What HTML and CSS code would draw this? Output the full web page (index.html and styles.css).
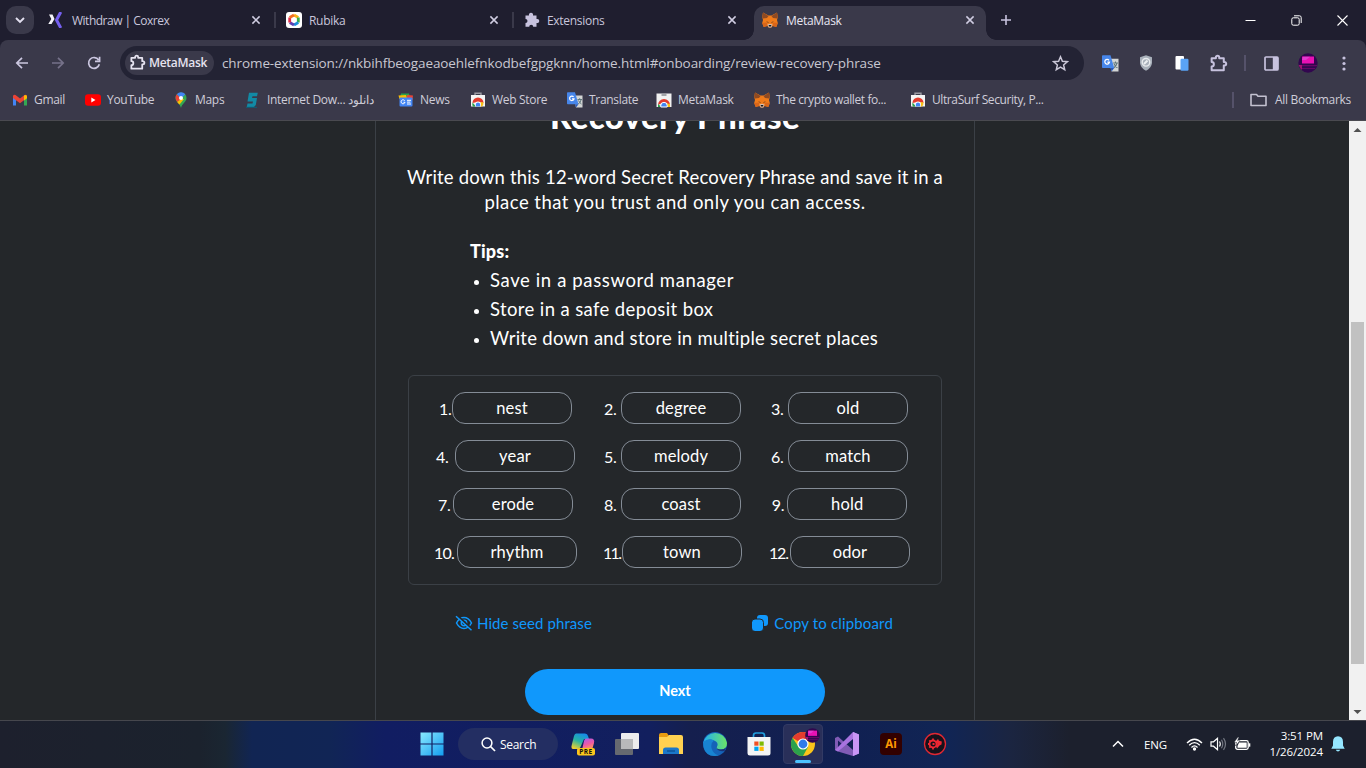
FILE: index.html
```html
<!DOCTYPE html>
<html lang="en">
<head>
<meta charset="utf-8">
<title>MetaMask</title>
<link rel="stylesheet" href="styles.css">
</head>
<body>
<svg class="defs" width="0" height="0">
  <defs>
    <symbol id="fox" viewBox="0 0 16 16">
      <path d="M1 0.5 6.5 3.5H9.5L15 .5 15.8 5 15 8 15.8 11 14.3 15 10.8 14 9.3 15.5H6.7L5.2 14 1.7 15 .2 11 1 8 .2 5z" fill="#f07b1a"/>
      <path d="M1 .5 6.5 4 5 6 .8 6.5.2 5zM15 .5 9.500 4 11 6 15.200 6.500 15.800 5z" fill="#8f4a22"/>
      <path d="M.2 11 5 10.500 5.200 14 1.700 15zM15.800 11 11 10.500 10.800 14 14.300 15z" fill="#d9661a"/>
      <path d="M4 9 6.500 10.200 6.300 11zM12 9 9.500 10.200 9.700 11z" fill="#3a2a2a"/>
      <path d="M5.500 12.500 8 11.800 10.500 12.500 9.300 15.500H6.700z" fill="#d5bfb2"/>
      <path d="M6.600 13H9.400L9 14.400H7z" fill="#1d1a1c"/>
    </symbol>
    <symbol id="puzzle" viewBox="0 0 18 18">
      <path d="M2.500 4H6.500V3.300A1.600 1.600 0 0 1 9.700 3.300V4H14V7.600H14.600A1.700 1.700 0 0 1 14.600 11H14V15.500H2.500V11.800A2.100 2.100 0 0 0 2.500 7.600z" fill="none" stroke="currentColor" stroke-width="1.900" stroke-linejoin="round"/>
    </symbol>
    <symbol id="store" viewBox="0 0 16 16">
      <path d="M5 3V1.200H11V3" fill="none" stroke="#9a9aa2" stroke-width="1.400"/>
      <path d="M1 3H15V14.500H1z" fill="#f4f4f4"/>
      <path d="M2.500 11A5.500 5.500 0 0 1 13.500 11L11 10.500H5z" fill="#e33b2e"/>
      <path d="M2.500 10.500 6 14.500H3A5 5 0 0 1 2.500 10.500z" fill="#2ba24c"/>
      <path d="M13.500 10.500A5 5 0 0 1 12 14.500H8L11 10z" fill="#fbc116"/>
      <path d="M5 14.500V12.500A3 3 0 0 1 11 12.500V14.500z" fill="#fff"/>
      <path d="M5.800 14.500V12.800A2.200 2.200 0 0 1 10.200 12.800V14.500z" fill="#4285f4"/>
    </symbol>
    <symbol id="translate" viewBox="0 0 16 16">
      <path d="M6 3.500H15.500V15.500H9z" fill="#d3d6d5"/>
      <path d="M.8.200H8L11.500 12.200H.8Q0 12.200 0 11.400V1Q0 .2.800.200z" fill="#4786ea"/>
      <path d="M8 12.200H11.500L9 15.500z" fill="#2858b8"/>
      <path d="M6.600 5A2.200 2.200 0 1 0 7 6.800H5" fill="none" stroke="#fff" stroke-width="1.200"/>
      <path d="M10.500 7.500H15M12.700 6.200V7.500M14.200 7.500Q13.500 10.500 11.300 12M11.500 8.500Q12.500 10.800 14.500 12" fill="none" stroke="#60777c" stroke-width="1"/>
    </symbol>
    <symbol id="close" viewBox="0 0 10 10"><path d="M1.400 1.400 8.600 8.600M8.600 1.400 1.400 8.600" stroke="currentColor" stroke-width="1.500"/></symbol>
    <symbol id="avatar" viewBox="0 0 20 20">
      <circle cx="10" cy="10" r="9.700" fill="#32064f"/>
      <path d="M4 3.500H16V10.500H4z" fill="#e811b4"/>
      <path d="M5 3.700H12L8 7H4z" fill="#e03bcf"/>
      <path d="M1 12H19V13.300H1zM3 15H17V16H3z" fill="#650764"/>
      <path d="M.6 12H4V16.500H3z" fill="#a01173"/>
    </symbol>
  </defs>
</svg>

<header class="tabstrip">
  <div class="tab-search"><svg width="10" height="7" viewBox="0 0 10 7"><path d="M1 1 5 5 9 1" fill="none" stroke="currentColor" stroke-width="1.900"/></svg></div>
  <div class="tab first">
    <svg class="favicon" viewBox="0 0 16 16"><path d="M12.800 0 8.500 8 12.800 16" fill="none" stroke="#7560ef" stroke-width="3"/><path d="M1 2.500H4.500L6.500 7 3.500 12H.3L3.300 7z" fill="#f5f5fa"/></svg>
    <span class="tab-title">Withdraw | Coxrex</span>
    <svg class="x"><use href="#close"/></svg>
  </div>
  <div class="tab ruled">
    <svg class="favicon" viewBox="0 0 16 16"><rect width="16" height="16" rx="3" fill="#fff"/><g fill="none" stroke-width="2.800"><path d="M8 3 12.300 5.500" stroke="#f6b21a"/><path d="M12.300 5.500V10.500" stroke="#3cae4a"/><path d="M12.300 10.500 8 13" stroke="#1d8fdc"/><path d="M8 13 3.700 10.500" stroke="#5842b5"/><path d="M3.700 10.500V5.500" stroke="#e02e4a"/><path d="M3.700 5.500 8 3" stroke="#f36c21"/></g></svg>
    <span class="tab-title">Rubika</span>
    <svg class="x"><use href="#close"/></svg>
  </div>
  <div class="tab ruled">
    <svg class="favicon" viewBox="0 0 16 16"><path d="M1.500 3.500H5A2.100 2.100 0 1 1 9 3.500H12.500V7A2.100 2.100 0 1 1 12.500 11V14.800H9.200A2 2 0 0 0 5.200 14.800H1.500V11A2 2 0 0 0 1.500 7z" fill="#c7c2de"/></svg>
    <span class="tab-title">Extensions</span>
    <svg class="x"><use href="#close"/></svg>
  </div>
  <div class="tab active">
    <svg class="favicon"><use href="#fox"/></svg>
    <span class="tab-title">MetaMask</span>
    <svg class="x"><use href="#close"/></svg>
  </div>
  <svg class="new-tab" width="12" height="12" viewBox="0 0 12 12"><path d="M6 1V11M1 6H11" stroke="currentColor" stroke-width="1.600"/></svg>
  <div class="window-controls">
    <svg width="11" height="11"><path d="M.5 5.500H10.500" stroke="#fff"/></svg>
    <svg width="11" height="11" fill="none" stroke="#fff"><rect x=".8" y="2.800" width="7.400" height="7.400" rx="1.500"/><path d="M3 .8H8.500Q10.200.8 10.200 2.500V8"/></svg>
    <svg width="11" height="11"><path d="M.5.500 10.500 10.500M10.500.500.500 10.500" stroke="#fff" stroke-width="1.100"/></svg>
  </div>
</header>

<div class="chrome">
  <div class="toolbar">
    <svg class="nav back" viewBox="0 0 14 14"><path d="M13 7H2M7 1.800 1.800 7 7 12.200" fill="none" stroke="#cbc7e0" stroke-width="1.700"/></svg>
    <svg class="nav forward" viewBox="0 0 14 14"><path d="M1 7H12M7 1.800 12.200 7 7 12.200" fill="none" stroke="#76728a" stroke-width="1.700"/></svg>
    <svg class="nav reload" viewBox="0 0 14 14"><path d="M11.600 4A5.400 5.400 0 1 0 12.300 8.200M12.600.8V5.300H8" fill="none" stroke="#cbc7e0" stroke-width="1.700"/></svg>
    <div class="omnibox">
      <div class="chip"><svg width="17" height="17"><use href="#puzzle"/></svg><span>MetaMask</span></div>
      <span class="url">chrome-extension://nkbihfbeogaeaoehlefnkodbefgpgknn/home.html#onboarding/review-recovery-phrase</span>
      <svg class="star" width="17" height="17" viewBox="0 0 17 17"><path d="M8.500 1.800 10.400 6.300 15.300 6.700 11.600 9.900 12.700 14.700 8.500 12.100 4.300 14.700 5.400 9.900 1.700 6.700 6.600 6.300z" fill="none" stroke="#cbc8d8" stroke-width="1.500"/></svg>
    </div>
    <div class="actions">
      <svg class="a-translate" width="17" height="17"><use href="#translate"/></svg>
      <svg class="a-shield" width="14" height="16" viewBox="0 0 14 16"><path d="M7 .3 13 2.300V8Q12.500 13 7 15.700 1.500 13 1 8V2.300z" fill="#a8b0ba"/><circle cx="7" cy="7.300" r="3.800" fill="none" stroke="#e8ebee" stroke-width="1.400"/><path d="M5 9 8.500 5.500" stroke="#edf0f2" stroke-width="2"/></svg>
      <svg class="a-pages" width="14" height="15" viewBox="0 0 14 15"><rect x=".5" width="8.500" height="13.500" rx="1" fill="#fff"/><rect x="5.500" y="2.700" width="8" height="12" rx="1.200" fill="#5aa3f5"/></svg>
      <svg class="a-puzzle" width="19" height="19"><use href="#puzzle"/></svg>
      <i class="bar"></i>
      <svg class="a-panel" width="15" height="15" viewBox="0 0 15 15"><rect x="1" y="1" width="13" height="13" rx="1" fill="none" stroke="#c7c2de" stroke-width="1.700"/><path d="M8.800 1H14V14H8.800z" fill="#c7c2de"/></svg>
      <svg class="a-avatar" width="20" height="20"><use href="#avatar"/></svg>
      <svg class="a-menu" width="4" height="15" fill="#c7c2de"><circle cx="2" cy="2" r="1.600"/><circle cx="2" cy="7.500" r="1.600"/><circle cx="2" cy="13" r="1.600"/></svg>
    </div>
  </div>
  <nav class="bookmarks">
    <div class="bm b1"><svg viewBox="0 0 16 16"><path d="M1 3.500V13.500H4V7z" fill="#4285f4"/><path d="M15 3.500V13.500H12V7z" fill="#34a853"/><path d="M1 4.200Q1.500 2.300 3.500 3L8 6.500 12.500 3Q14.500 2.300 15 4.200V6L8 11.300 1 6z" fill="#ea4335"/><path d="M12 3.500Q14.800 2 15 4.500V6.200L12 8.400z" fill="#fbbc04"/></svg><span>Gmail</span></div>
    <div class="bm b2"><svg viewBox="0 0 16 16"><rect y="2.300" width="16" height="11.500" rx="3" fill="#f00"/><path d="M6.300 5.600V10.500L10.500 8z" fill="#fff"/></svg><span>YouTube</span></div>
    <div class="bm b3"><svg viewBox="0 0 16 16"><path d="M2.500 6A5.500 5.500 0 0 1 13.500 6C13.500 10 9 11.500 8 16 7 11.500 2.500 10 2.500 6z" fill="#34a853"/><path d="M3.800 2.300A5.500 5.500 0 0 1 12.300 2.300L8 7z" fill="#4285f4"/><path d="M3.800 2.300 8 7 4.200 10Q1 5.500 3.800 2.300z" fill="#ea4335"/><path d="M8 7 4.200 10Q5.500 11.500 6.500 12.500L11 7z" fill="#fbbc04"/><circle cx="8" cy="6" r="2" fill="#fff"/></svg><span>Maps</span></div>
    <div class="bm b4"><svg viewBox="0 0 16 16"><path d="M4 .8H12.800L12 4.200H7.500L7 6H12L10.800 13 9 15H1.800L2.500 11.500H7.500L8 9.500H2.500z" fill="#128aa5"/><path d="M1 15.300H12" stroke="#0d6179"/></svg><span>Internet Dow... <bdi>دانلود</bdi></span></div>
    <div class="bm b5"><svg viewBox="0 0 16 16"><path d="M3 1.500H11L12 6H2z" fill="#2ba24c"/><path d="M9 3 15 3.500 14.500 8H8z" fill="#ea4335"/><path d="M.5 3.500 8 3 9 7H1.500z" fill="#fbbc04"/><rect x="1.500" y="5.500" width="13" height="9" rx="1" fill="#4285f4"/><path d="M6.800 8.800A2 2 0 1 0 7 10.300H5.500M9 8.300H13M9 10.100H12.500M9 12H13" fill="none" stroke="#fff" stroke-width="1"/></svg><span>News</span></div>
    <div class="bm b6"><svg><use href="#store"/></svg><span>Web Store</span></div>
    <div class="bm b7"><svg><use href="#translate"/></svg><span>Translate</span></div>
    <div class="bm b8"><svg viewBox="0 0 16 16"><path d="M.5 1.500H15.500V15H.5z" fill="#f1f1f1"/><path d="M5.500 3H10.500" stroke="#70727a" stroke-width="1.200"/><path d="M2 13A6 6 0 0 1 14 13L11 11.500H5z" fill="#e33b2e"/><path d="M2 12 5.500 15H2z" fill="#2ba24c"/><path d="M14 12V15H9L11 11.500z" fill="#fbc116"/><path d="M4.800 15V13.500A3.200 3.200 0 0 1 11.200 13.500V15z" fill="#4285f4" stroke="#fff"/></svg><span>MetaMask</span></div>
    <div class="bm b9"><svg><use href="#fox"/></svg><span>The crypto wallet fo...</span></div>
    <div class="bm b10"><svg><use href="#store"/></svg><span>UltraSurf Security, P...</span></div>
    <div class="all-bookmarks"><svg width="17" height="14" viewBox="0 0 17 14"><path d="M1 1.500H6.500L8 3.300H16V12.500H1z" fill="none" stroke="#c3c1d0" stroke-width="1.600" stroke-linejoin="round"/></svg><span>All Bookmarks</span></div>
  </nav>
</div>

<main class="viewport">
  <section class="card">
    <h2>Recovery Phrase</h2>
    <p class="intro"><span class="i1">Write down this 12-word Secret Recovery Phrase and save it in a</span><br><span class="i2">place that you trust and only you can access.</span></p>
    <div class="tips">
      <b>Tips:</b>
      <ul>
        <li class="t1">Save in a password manager</li>
        <li class="t2">Store in a safe deposit box</li>
        <li class="t3">Write down and store in multiple secret places</li>
      </ul>
    </div>
    <ol class="words">
      <li><i class="n13">1.</i><b>nest</b></li><li><i class="n17">2.</i><b>degree</b></li><li><i class="n17">3.</i><b>old</b></li>
      <li><i class="n19">4.</i><b>year</b></li><li><i class="n17">5.</i><b>melody</b></li><li><i class="n17">6.</i><b>match</b></li>
      <li><i class="n15">7.</i><b>erode</b></li><li><i class="n17">8.</i><b>coast</b></li><li><i class="n16">9.</i><b>hold</b></li>
      <li><i class="n23">10.</i><b>rhythm</b></li><li><i class="n18">11.</i><b>town</b></li><li><i class="n21">12.</i><b>odor</b></li>
    </ol>
    <div class="links">
      <a class="hide"><svg width="18" height="16" viewBox="0 0 18 16" fill="none" stroke="currentColor" stroke-width="1.500"><path d="M1.500 8Q4.500 2.500 9 2.500T16.500 8Q13.500 13.500 9 13.500T1.500 8z"/><circle cx="9" cy="8" r="2.700"/><path d="M2.500 .8 17.500 14.500" stroke="#24272a" stroke-width="2"/><path d="M1 1.200 16.500 15.300"/></svg><span>Hide seed phrase</span></a>
      <a class="copy"><svg width="16" height="16" viewBox="0 0 16 16"><rect x="5" y="0" width="11" height="11" rx="3" fill="#1098fc"/><rect x="-.5" y="4" width="12" height="12.500" rx="3.500" fill="#1098fc" stroke="#24272a" stroke-width="1"/></svg><span>Copy to clipboard</span></a>
    </div>
    <button class="next">Next</button>
  </section>
  <aside class="scrollbar">
    <svg width="17" height="17"><path d="M4.500 11 8.500 7 12.500 11z" fill="#505050"/></svg>
    <div class="thumb"></div>
    <svg width="17" height="17"><path d="M4.500 7 8.500 11 12.500 7z" fill="#505050"/></svg>
  </aside>
</main>

<footer class="taskbar">
  <svg class="start" width="24" height="24" viewBox="0 0 24 24"><defs><linearGradient id="win" x2="1" y2="1"><stop stop-color="#8ae9ff"/><stop offset="1" stop-color="#139df0"/></linearGradient></defs><path d="M.5.500H11.400V11.400H.5zM12.600.500H23.500V11.400H12.600zM.5 12.600H11.400V23.500H.5zM12.600 12.600H23.500V23.500H12.600z" fill="url(#win)"/></svg>
  <div class="search"><svg width="15" height="15" viewBox="0 0 15 15"><circle cx="6" cy="6" r="4.900" fill="none" stroke="#fff" stroke-width="1.500"/><path d="M9.500 9.500 14 14" stroke="#fff" stroke-width="1.700"/></svg><span>Search</span></div>
  <div class="apps">
    <svg viewBox="0 0 24 24"><defs><linearGradient id="cp" x1=".7" x2=".2" y2="1"><stop stop-color="#168bea"/><stop offset=".5" stop-color="#26b3a4"/><stop offset="1" stop-color="#f6cf2b"/></linearGradient><linearGradient id="cq" x2=".4" y2="1"><stop stop-color="#a55af4"/><stop offset=".6" stop-color="#ef59a1"/><stop offset="1" stop-color="#ff9a5b"/></linearGradient></defs><path d="M5 1.500H14Q16.500 1.500 17 4L18 7H13L9.500 15Q8.500 17.500 6 17H2Q-.5 17 1 12L3 4Q3.700 1.500 5 1.500z" fill="url(#cp)"/><path d="M15 6.500H20Q24 6.500 23 11L21 18H11L13 9Q13.500 6.500 15 6.500z" fill="url(#cq)"/><rect x="6" y="16" width="18" height="7.500" rx="2" fill="#fac51c"/><text x="15" y="22.200" class="pre">PRE</text></svg>
    <svg viewBox="0 0 24 24"><rect x="6" y="1" width="18" height="16" rx="1" fill="#ececed"/><rect y="7" width="18" height="16" rx="1" fill="#666970"/><path d="M6 7H18V17H6z" fill="#b8b9bb"/></svg>
    <svg viewBox="0 0 24 24"><path d="M0 3Q0 1 2 1H8L10 4V8H0z" fill="#e89b10"/><path d="M0 5H8L10 3H22Q24 3 24 5V22H0z" fill="#ffd151"/><path d="M4 22V18Q4 15.500 6.500 15.500H17.500Q20 15.500 20 18V22z" fill="#1b77c9"/><path d="M8 19H16" stroke="#0a4c8c" stroke-width="1.200"/></svg>
    <svg viewBox="0 0 24 24"><defs><linearGradient id="ed" x2="1"><stop stop-color="#23aef0"/><stop offset="1" stop-color="#6be466"/></linearGradient></defs><circle cx="12" cy="12" r="12" fill="#1563b8"/><path d="M.3 11A12 12 0 0 1 24 11Q24 17 18 17.500 13 18 13.500 15.500 16 12 13 9.500 6 5 .3 11z" fill="url(#ed)"/><path d="M.2 10Q5 5.500 11 8.500 7.500 11 8.500 16 10 22 16 23.500 3 26 .5 15z" fill="#1884d2"/><path d="M13 14Q13.500 17.500 18 17.500 21.500 17.500 23 15.500L21.500 19Q13 20 13 14z" fill="#173378"/></svg>
    <svg viewBox="0 0 24 24"><path d="M6.500 6V3.500Q6.500 1 9 1H15Q17.500 1 17.500 3.500V6" fill="none" stroke="#209fdd" stroke-width="1.700"/><path d="M.5 5H23.500V21Q23.500 23.500 21 23.500H3Q.5 23.500.5 21z" fill="#f3f4f5"/><path d="M7.300 9.500H11.500V13.700H7.300z" fill="#f25022"/><path d="M12.500 9.500H16.700V13.700H12.500z" fill="#7fba00"/><path d="M7.300 14.700H11.500V18.900H7.300z" fill="#00a4ef"/><path d="M12.500 14.700H16.700V18.900H12.500z" fill="#ffb900"/></svg>
    <div class="running"><svg viewBox="0 0 24 24"><circle cx="12" cy="12" r="12" fill="#fcc41a"/><path d="M12 12 1.600 6A12 12 0 0 1 22.400 6L22 7H12z" fill="#e33b2e"/><path d="M12 12 17 15 12 24A12 12 0 0 1 1.600 6L7 14z" fill="#2ba24c"/><circle cx="12" cy="12" r="5.600" fill="#fff"/><circle cx="12" cy="12" r="4.400" fill="#317bea"/></svg><svg class="badge"><use href="#avatar"/></svg></div>
    <svg viewBox="0 0 24 24"><path d="M0 6 3 4.500 18 18V24L3 19.500 0 18z" fill="#805bb5"/><path d="M3 8.500 7 12 3 15.500z" fill="#17205a"/><path d="M0 18 18 0 24 2.500V21.500L18 24V7L3 19.500z" fill="#a873df"/><path d="M18 0 24 2.500V21.500L18 24z" fill="#c895f5"/></svg>
    <svg viewBox="0 0 24 24"><rect x="1" y="1" width="22" height="22" rx="4" fill="#320000"/><text x="12" y="16" class="ai">Ai</text></svg>
    <svg viewBox="0 0 24 24"><circle cx="12" cy="12" r="10.500" fill="#17121b" stroke="#df2833" stroke-width="1.300"/><g fill="none" stroke="#ef2733"><circle cx="10" cy="12" r="3.500" stroke-width="1.800"/><path d="M10 6.500V8.500M10 15.500V17.500M5 12H6.500M6.300 8.300 7.500 9.500M6.300 15.700 7.500 14.500M9.500 12H11.500" stroke-width="1.800"/></g><path d="M12.500 9.500 15 7 16 8.800 18.800 9.500 18.500 12.500 16.500 13.500 14 16.500 12.800 14 14.500 12z" fill="#ef2733"/></svg>
  </div>
  <div class="tray">
    <svg class="up" width="12" height="8"><path d="M1 6.500 6 1.500 11 6.500" fill="none" stroke="#fff" stroke-width="1.500"/></svg>
    <span class="lang">ENG</span>
    <svg class="wifi" width="17" height="13" viewBox="0 0 17 13" fill="none" stroke="#fff" stroke-width="1.300"><path d="M1 5Q8.500-2.500 16 5M3.200 7.300Q8.500 2 13.800 7.300M5.500 9.500Q8.500 6.300 11.500 9.500"/><circle cx="8.500" cy="11" r="1" fill="#fff"/></svg>
    <svg class="sound" width="17" height="14" viewBox="0 0 17 14" fill="none" stroke="#fff" stroke-width="1.200"><path d="M1 4.800H3.500L7.500 1.300V12.700L3.500 9.200H1zM9.500 4.500Q11 7 9.500 9.500"/><path d="M11.500 2.800Q14 7 11.500 11.200M13.500 1.200Q17.500 7 13.500 12.800" stroke="#737782"/></svg>
    <svg class="battery" width="17" height="14" viewBox="0 0 17 14"><rect x="1.700" y="3.700" width="12.500" height="8.600" rx="1.800" fill="none" stroke="#fff" stroke-width="1.300"/><path d="M5 5.500H12.700V10.700H3.500V9z" fill="#fff"/><path d="M14.800 6.300H16.300V9.700H14.800z" fill="#fff"/><path d="M4 0 0 5.300H2.500L1.500 9 6 3.700H3.500L5 0z" fill="#fff" stroke="#1c202c" stroke-width=".5"/></svg>
    <div class="clock"><span class="time">3:51 PM</span><span class="date">1/26/2024</span></div>
    <svg class="bell" width="14" height="16" viewBox="0 0 14 16"><path d="M7 .3Q12 .6 12 6V9.500L13.700 12.800H.3L2 9.500V6Q2 .6 7 .3zM4.800 13.700H9.200Q8.500 15.500 7 15.500T4.800 13.700z" fill="#95e6ff"/></svg>
  </div>
</footer>
</body>
</html>
```
FILE: styles.css
```css
* { box-sizing: border-box; }
body {
  margin: 0; width: 1366px; height: 768px; overflow: hidden;
  display: flex; flex-direction: column;
  background: #1f1e2f; color: #d6d4e2;
  font: 12px "Open Sans", "Noto Sans", sans-serif;
  letter-spacing: -.3px;
}
svg { display: block; flex: none; }
.defs { position: absolute; }
span { white-space: nowrap; }

.tabstrip { height: 40px; flex: none; display: flex; align-items: center; background: #1f1e2f; }
.tab-search { width: 28px; height: 28px; margin-left: 6px; border-radius: 10px; background: #3a394a; display: grid; place-items: center; color: #e3e0f0; }
.tab { width: 238px; height: 40px; display: flex; align-items: center; padding: 0 14px 0 11px; position: relative; color: #c9c6dc; }
.tab.first { margin-left: 3px; }
.tab.first .tab-title { letter-spacing: -.5px; }
.tab.ruled::before { content: ""; width: 2px; height: 16px; background: #3a394a; margin: 0 10px 0 -12px; }
.favicon { width: 16px; height: 16px; }
.tab-title { margin-left: 8px; flex: 1; }
.tab.ruled .tab-title { margin-left: 7px; }
.x { width: 10px; height: 10px; color: #d0cde2; }
.tab.active { width: 232px; height: 34px; margin: 6px 0 0 3px; padding: 0 11px 6px 8px; border-radius: 10px 10px 0 0; background: #3a394a; color: #e8e6f2; }
.tab.active::before, .tab.active::after { content: ""; position: absolute; bottom: 0; width: 10px; height: 10px; }
.tab.active::before { left: -10px; background: radial-gradient(circle at 0 0, transparent 9.500px, #3a394a 10px); }
.tab.active::after { right: -10px; background: radial-gradient(circle at 100% 0, transparent 9.500px, #3a394a 10px); }
.new-tab { margin-left: 14px; color: #c7c2de; }
.window-controls { margin-left: auto; display: flex; gap: 35px; padding-right: 18px; }

.chrome { height: 81px; flex: none; background: #3a394a; border-radius: 8px 8px 0 0; border-bottom: 1px solid #4a4a50; }
.toolbar { height: 46px; display: flex; align-items: center; }
.nav { width: 14px; height: 14px; }
.back { margin-left: 15px; }
.forward { margin-left: 22px; }
.reload { margin-left: 22px; }
.omnibox { width: 964px; height: 34px; margin-left: 19px; border-radius: 17px; background: #232334; display: flex; align-items: center; padding: 0 15px 0 5px; }
.chip { width: 89px; height: 24px; border-radius: 12px; background: #3a394a; display: flex; align-items: center; padding: 0 0 1px 4px; gap: 3px; color: #e6e3f0; font-weight: 600; }
.url { margin-left: 8px; flex: 1; font-size: 13.500px; letter-spacing: -.1px; color: #c8c7d1; }
.actions { flex: 1; display: flex; align-items: center; }
.a-translate { margin-left: 18px; }
.a-shield { margin-left: 20px; }
.a-pages { margin-left: 22px; }
.a-puzzle { margin-left: 20px; color: #c7c2de; }
.bar { width: 2px; height: 16px; background: #55526a; margin-left: 16px; }
.a-panel { margin-left: 18px; }
.a-avatar { margin-left: 19px; }
.a-menu { margin-left: 24px; }

.bookmarks { height: 34px; display: flex; align-items: center; padding: 0 15px 6px 12px; color: #cfcdd9; }
.bm { display: flex; align-items: center; gap: 6px; height: 28px; }
.bm svg { width: 16px; height: 16px; }
.bm span, .all-bookmarks span { padding-bottom: 2px; }
.b1 { width: 73px; }
.b2 { width: 88px; }
.b3 { width: 72px; }
.b4 { width: 153px; }
.b5 { width: 72px; }
.b6 { width: 97px; }
.b7 { width: 89px; }
.b8 { width: 98px; }
.b9 { width: 156px; }
.b9 span, .b10 span { letter-spacing: -.4px; }
.all-bookmarks { margin-left: auto; display: flex; align-items: center; gap: 8px; border-left: 2px solid #55526a; height: 16px; padding-left: 16px; }

.viewport { height: 599px; flex: none; display: flex; background: #24272a; overflow: hidden; color: #fff; letter-spacing: 0; font-variant-ligatures: none; font-family: Lato, "Open Sans", sans-serif; }
.card { width: 600px; margin-left: 375px; padding: 0 32px; border: solid #3b4046; border-width: 0 1px; }
h2 { margin: -25px 0 0; font-size: 33px; line-height: 40px; font-weight: 900; text-align: center; letter-spacing: .350px; }
.intro { margin: 29px -10px 0; font-size: 18.500px; line-height: 25px; text-align: center; }
.i1 { letter-spacing: .180px; }
.i2 { letter-spacing: .480px; }
.tips { margin: 22px 0 0 62px; font-size: 18.500px; line-height: 29px; }
.tips b { display: block; font-weight: 900; font-size: 18px; letter-spacing: .2px; }
.tips ul { margin: 0; padding-left: 20px; white-space: nowrap; }
.tips li::marker { font-size: 14px; }
.t1 { letter-spacing: .620px; }
.t2 { letter-spacing: .380px; }
.t3 { letter-spacing: .270px; }
.words { list-style: none; margin: 22px 0 0; width: 534px; height: 210px; border: 1px solid #3b4046; border-radius: 6px; padding: 16px 18px 16px 13px; display: grid; grid-template-columns: repeat(3, 167px); grid-auto-rows: 32px; row-gap: 16px; font-size: 16.500px; }
.words li { display: flex; justify-content: center; align-items: center; }
.words i { font-style: normal; white-space: nowrap; font-size: 16px; letter-spacing: -.4px; }
.words b { width: 120px; height: 32px; border: 1px solid #848c96; border-radius: 13px; font-weight: 400; text-align: center; line-height: 30px; letter-spacing: .15px; }
.n13 { width: 13px; } .n15 { width: 15px; } .n16 { width: 15.500px; } .n17 { width: 17px; } .n19 { width: 19px; }
.words .n18 { width: 19px; letter-spacing: -1.700px; }
.words .n21 { width: 21px; letter-spacing: -1.200px; }
.words .n23 { width: 23px; letter-spacing: -.8px; }
.links { display: flex; justify-content: space-between; height: 20px; margin: 28px 49px 0 47px; color: #1098fc; font-size: 15px; }
.links a { display: flex; align-items: center; }
.links span { padding-bottom: 1px; }
.hide { gap: 4px; letter-spacing: .080px; }
.copy { gap: 6px; letter-spacing: .150px; }
.next { display: block; width: 300px; height: 46px; margin: 36px auto 0; padding: 0 0 4px; border: 0; border-radius: 23px; background: #1098fc; color: #fff; font: 700 14.500px Lato, sans-serif; }
.scrollbar { width: 17px; height: 599px; margin-left: 374px; background: #f1f1f1; display: flex; flex-direction: column; }
.thumb { width: 13px; height: 342px; margin: 184px 2px auto; background: #c1c1c1; }

.taskbar { height: 48px; flex: none; display: flex; align-items: center; padding-bottom: 1px; border-top: 1px solid #46474d; background: linear-gradient(90deg, #1d202d 0, #1b222d 200px, #1a2632 225px, #112553 252px, #112555 330px, #111d62 385px, #121f5e 650px, #151f4e 690px, #102052 850px, #112554 950px, #1b2541 1010px, #1c202d 1070px); color: #fff; }
.start { margin-left: 420px; }
.search { width: 100px; height: 32px; margin-left: 14px; border-radius: 16px; background: #232e62; display: flex; align-items: center; padding-left: 23px; gap: 4px; }
.apps { display: flex; align-items: center; margin-left: 13px; gap: 20px; }
.apps > svg { width: 24px; height: 24px; }
.running { width: 40px; height: 40px; margin: 0 -8px; border-radius: 4px; background: #292f59; border: 1px solid #323a64; display: grid; place-items: center; position: relative; }
.running svg { width: 24px; height: 24px; }
.running .badge { position: absolute; left: 21px; top: 3px; width: 15px; height: 15px; }
.running::after { content: ""; position: absolute; left: 11px; bottom: 0; width: 16px; height: 3px; border-radius: 2px; background: #4cc2ff; }
.pre { font: 700 6.500px "Open Sans", sans-serif; text-anchor: middle; letter-spacing: .5px; fill: #111; }
.ai { font: 700 11.500px "Open Sans", sans-serif; text-anchor: middle; letter-spacing: 0; fill: #ff9a00; }
.tray { margin-left: auto; display: flex; align-items: center; padding-right: 21px; }
.lang { margin-left: 20px; width: 42px; font-size: 11.500px; letter-spacing: -.1px; }
.sound { margin-left: 7px; }
.battery { margin-left: 7px; }
.clock { margin-left: 15px; width: 57px; display: flex; flex-direction: column; align-items: flex-end; line-height: 16px; font-size: 11.500px; letter-spacing: -.1px; }
.bell { margin-left: 8px; }
```
